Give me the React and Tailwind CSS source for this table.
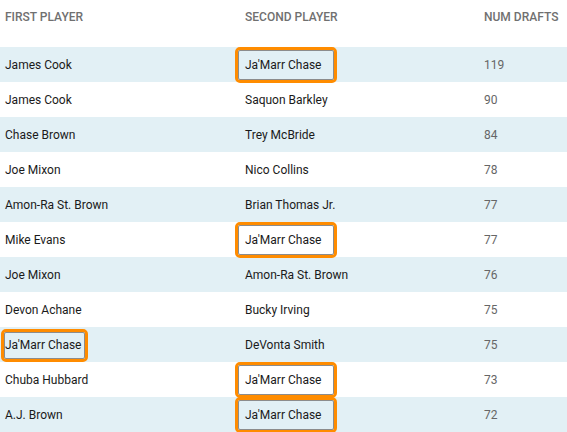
import React from "react";

const rows = [
  ["James Cook", "Ja'Marr Chase", "119", 2],
  ["James Cook", "Saquon Barkley", "90", 0],
  ["Chase Brown", "Trey McBride", "84", 0],
  ["Joe Mixon", "Nico Collins", "78", 0],
  ["Amon-Ra St. Brown", "Brian Thomas Jr.", "77", 0],
  ["Mike Evans", "Ja'Marr Chase", "77", 2],
  ["Joe Mixon", "Amon-Ra St. Brown", "76", 0],
  ["Devon Achane", "Bucky Irving", "75", 0],
  ["Ja'Marr Chase", "DeVonta Smith", "75", 1],
  ["Chuba Hubbard", "Ja'Marr Chase", "73", 2],
  ["A.J. Brown", "Ja'Marr Chase", "72", 2],
];

function Box({ col }) {
  if (col === 1) {
    return (
      <div className="absolute left-[1px] top-[2px] w-[87px] h-[33px] rounded-[5px] border-[3px] border-[#ff8c00] pointer-events-none">
        <div className="w-full h-full rounded-[2px] border border-[#8c8c8c]" />
      </div>
    );
  }
  return (
    <div className="absolute left-[-5px] top-0 w-[102px] h-[36px] rounded-[5px] border-[3px] border-[#ff8c00] pointer-events-none">
      <div className="w-full h-full rounded-[2px] border border-[#8c8c8c]" />
    </div>
  );
}

export default function App() {
  return (
    <div
      className="w-[567px] h-[432px] overflow-hidden bg-white text-[12px] text-[#1a1a1a]"
      style={{ fontFamily: "Roboto, 'Liberation Sans', sans-serif" }}
    >
      <div className="grid grid-cols-[240px_239px_88px] h-[47px] text-[12px] font-medium text-[#707070]">
        <div className="pl-[5px] pt-[8px]">FIRST PLAYER</div>
        <div className="pl-[5px] pt-[8px]">SECOND PLAYER</div>
        <div className="pl-[5px] pt-[8px]">NUM DRAFTS</div>
      </div>
      {rows.map(([a, b, n, hl], i) => (
        <div
          key={i}
          className={`grid grid-cols-[240px_239px_88px] h-[35px] items-center ${
            i % 2 === 0 ? "bg-[#e2f0f5]" : "bg-white"
          }`}
        >
          <div className="relative h-full flex items-center pl-[5px]">
            {hl === 1 && <Box col={1} />}
            <span className="relative">{a}</span>
          </div>
          <div className="relative h-full flex items-center pl-[5px]">
            {hl === 2 && <Box col={2} />}
            <span className="relative">{b}</span>
          </div>
          <div className="h-full flex items-center pl-[5px] text-[#666]">{n}</div>
        </div>
      ))}
    </div>
  );
}
